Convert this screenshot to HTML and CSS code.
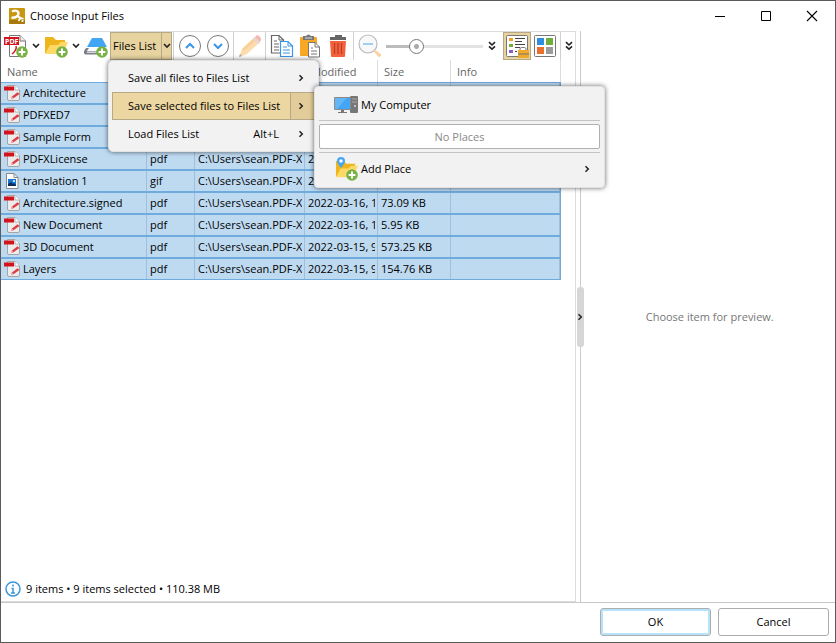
FILE: index.html
```html
<!DOCTYPE html>
<html lang="en">

<head>
    <meta charset="utf-8">
    <title>Choose Input Files</title>
    <link rel="stylesheet" href="styles.css">
</head>

<body>
    <!-- Shared icons -->
    <svg class="sprite" aria-hidden="true">
        <symbol id="caret" viewBox="0 0 8 8"><path d="M1 2L4 5L7 2" fill="none" stroke="#222" stroke-width="1.6"/></symbol>
        <symbol id="arrow" viewBox="0 0 8 8"><path d="M2.5 1.2L5.3 4L2.5 6.8" fill="none" stroke="#222" stroke-width="1.5"/></symbol>
        <symbol id="more" viewBox="0 0 8 10"><path d="M1 1.2L4 4L7 1.2M1 5.4L4 8.2L7 5.4" fill="none" stroke="#222" stroke-width="1.6"/></symbol>
        <symbol id="plus" viewBox="0 0 12 12"><circle cx="6" cy="6" r="5.8" fill="#77b243"/><path d="M6 2.6V9.4M2.6 6H9.4" stroke="#fff" stroke-width="2"/></symbol>
        <symbol id="pdf" viewBox="0 0 16 16">
            <path d="M3.5.5H11L15.5 5V14Q15.500 15.500 14 15.500H5Q3.500 15.500 3.500 14Z" fill="#ececec" stroke="#a5a5a5"/>
            <path d="M11 .5V5H15.5" fill="#fff" stroke="#a5a5a5" stroke-width=".8"/>
            <path d="M0 1.500H10V5.500H0Z" fill="#d2141e"/>
            <path d="M7 14L8 11.500L13.500 7.200L15.500 9L9.500 13.200Z" fill="#dd3f48"/>
            <path d="M7 14L8 11.500L9.500 13.200Z" fill="#f5b9bb"/>
        </symbol>
        <symbol id="folder" viewBox="0 0 24 24">
            <path d="M1 3H9L12 6H21V19H1Z" fill="#efb51c"/>
            <path d="M1 20L6 11L14 11L17 8H24L19 20Z" fill="#ffd968"/>
        </symbol>
    </svg>

    <div class="window">
        <header class="titlebar">
            <svg class="app-icon" viewBox="0 0 16 16"><rect width="16" height="16" rx="1" fill="#c8960f"/><path d="M0 12H16V15Q16 16 15 16H1Q0 16 0 15Z" fill="#a87a0c"/><path d="M3 3.500C6 2 9.500 2.500 9.500 5.500C9.500 8.500 6 10 2.500 9.800" fill="none" stroke="#fff" stroke-width="2.400"/><path d="M8 7C9 10 11 8.500 12.500 11" fill="none" stroke="#fff" stroke-width="2.200"/><path d="M9.500 13L11 10.500L14.500 10.500M12.500 13.500L14.500 12.500" fill="none" stroke="#fff" stroke-width="1.500"/></svg>
            <h1 class="title">Choose Input Files</h1>
            <button class="win-btn" aria-label="Minimize"><svg width="12" height="12"><path d="M1 6.5H11" stroke="#000"/></svg></button>
            <button class="win-btn" aria-label="Maximize"><svg width="12" height="12"><path d="M1.5 1.5H10.5V10.5H1.5Z" fill="none" stroke="#000"/></svg></button>
            <button class="win-btn" aria-label="Close"><svg width="12" height="12"><path d="M1 1L11 11M11 1L1 11" stroke="#000" stroke-width="1.1"/></svg></button>
        </header>

        <main class="panes">
            <section class="files">
                <div class="toolbar">
                    <button class="tool" aria-label="Add files">
                        <svg width="26" height="26" viewBox="0 0 26 26"><path d="M6.500 2.500H17L22.500 8V23.500H6.500Z" fill="#fff" stroke="#777"/><path d="M17 2.500V8H22.500" fill="#eee" stroke="#777"/><path d="M9 21C12 19 14 15 13 13" fill="none" stroke="#d2141e" stroke-width="1.5"/><rect x="1" y="4" width="15" height="8" fill="#d2141e"/><text class="pdf-label" x="2" y="11">PDF</text><use href="#plus" x="13" y="13" width="12" height="12"/></svg>
                    </button>
                    <button class="drop" aria-label="Add files options"><svg width="8" height="8"><use href="#caret"/></svg></button>
                    <button class="tool" aria-label="Add folder">
                        <svg width="26" height="26" viewBox="0 0 26 26"><use href="#folder" x="1" y="1" width="24" height="24"/><use href="#plus" x="13" y="13" width="12" height="12"/></svg>
                    </button>
                    <button class="drop" aria-label="Add folder options"><svg width="8" height="8"><use href="#caret"/></svg></button>
                    <button class="tool" aria-label="Scan">
                        <svg width="26" height="26" viewBox="0 0 26 26"><path d="M9 5H19L24 14H4Z" fill="#42a5f5"/><path d="M4 14H24L21 17H2Z" fill="#fff"/><path d="M3 15L1 18V20Q1 21.500 3 21.500H22V18H4L6 15Z" fill="#7b8186"/><path d="M4 18.500H20V20H4Z" fill="#d5d8da"/><use href="#plus" x="13" y="13" width="12" height="12"/></svg>
                    </button>
                    <div class="split">
                        <button class="split-main">Files List</button>
                        <button class="split-drop" aria-label="Files List menu"><svg width="8" height="8"><use href="#caret"/></svg></button>

                        <div class="menu" role="menu">
                            <button class="menu-item" role="menuitem"><span class="menu-text">Save all files to Files List</span><svg class="menu-arrow"><use href="#arrow"/></svg></button>
                            <button class="menu-item active" role="menuitem"><span class="menu-text">Save selected files to Files List</span><svg class="menu-arrow"><use href="#arrow"/></svg></button>
                            <button class="menu-item" role="menuitem"><span class="menu-text">Load Files List</span><span class="shortcut">Alt+L</span><svg class="menu-arrow"><use href="#arrow"/></svg></button>

                            <div class="menu submenu" role="menu">
                                <button class="place" role="menuitem">
                                    <svg width="26" height="26" viewBox="0 0 26 26"><rect x="17" y="4" width="8" height="17" rx="1" fill="#777"/><path d="M19 7H24M19 10H24" stroke="#aaa"/><circle cx="22" cy="14" r="1" fill="#ddd"/><rect x="1" y="5" width="17" height="13" rx="1" fill="#8a8a8a"/><rect x="2" y="6" width="15" height="11" fill="#42a5f5"/><path d="M2 17V6H14L4 17Z" fill="#64b5f6"/><path d="M8 18H11V20H14V21H5V20H8Z" fill="#777"/></svg>
                                    <span>My Computer</span>
                                </button>
                                <hr class="rule">
                                <div class="no-places">No Places</div>
                                <hr class="rule">
                                <button class="place" role="menuitem">
                                    <svg width="26" height="26" viewBox="0 0 26 26"><use href="#folder" x="2" y="2" width="23" height="23"/><path d="M8 12C6 9 4 7 4 5A4 4 0 0 1 12 5C12 7 10 9 8 12Z" fill="#42a5f5"/><circle cx="8" cy="5" r="1.8" fill="#fff"/><use href="#plus" x="13" y="13" width="12" height="12"/></svg>
                                    <span class="menu-text">Add Place</span>
                                    <svg class="menu-arrow"><use href="#arrow"/></svg>
                                </button>
                            </div>
                        </div>
                    </div>
                    <span class="sep"></span>
                    <button class="tool wide" aria-label="Move up"><svg width="24" height="24"><circle cx="12" cy="12" r="10.5" fill="#fff" stroke="#777"/><path d="M8 14L12 10L16 14" fill="none" stroke="#3a96e8" stroke-width="2"/></svg></button>
                    <button class="tool wide" aria-label="Move down"><svg width="24" height="24"><circle cx="12" cy="12" r="10.5" fill="#fff" stroke="#777"/><path d="M8 10L12 14L16 10" fill="none" stroke="#3a96e8" stroke-width="2"/></svg></button>
                    <span class="sep"></span>
                    <button class="tool wide" aria-label="Edit" disabled><svg width="24" height="24"><path d="M1 23L4 15L17 3L22 8L9 20Z" fill="#fddcae"/><path d="M4 15L17 3L19 5L6 17Z" fill="#fbcf97"/><path d="M16 4L19 1Q23 2 23 6L21 9Z" fill="#f6b5ae"/><path d="M15 5L17 3L22 8L20 10Z" fill="#e4d8d0"/><path d="M1 23L2 20L4 22Z" fill="#aaa"/></svg></button>
                    <span class="sep"></span>
                    <button class="tool wide" aria-label="Copy"><svg width="24" height="24"><path d="M10 19H1.5V1.5H9L13.5 6V8" fill="none" stroke="#666" stroke-width="1.2"/><path d="M9 1.5V6H13.5M4 7H7M4 10H9M4 13H9M4 16H9" fill="none" stroke="#666"/><path d="M10.5 7.5H18L22.5 12V22.5H10.5Z" fill="#fff" stroke="#3a96e8" stroke-width="1.2"/><path d="M18 7.5V12H22.5M13 13H17M13 16H20M13 19H20" fill="none" stroke="#3a96e8"/></svg></button>
                    <button class="tool wide" aria-label="Paste"><svg width="24" height="24"><rect x="2" y="3" width="17" height="19" rx="1" fill="#f9a825"/><path d="M5 2H8Q10.500 -1 13 2H16V6H5Z" fill="#777"/><path d="M7 4H14" stroke="#ddd"/><path d="M10.500 8.500H17L21.500 13V23H10.500Z" fill="#fff" stroke="#777"/><path d="M17 8.500V13H21.500M13 14H15M13 17H19M13 20H19" fill="none" stroke="#777"/></svg></button>
                    <button class="tool wide" aria-label="Delete"><svg width="24" height="24"><path d="M9 3V1H16V3H20V6H4V3Z" fill="#666"/><path d="M4 7H20L19 22Q19 23 18 23H6Q5 23 5 22Z" fill="#f2603c"/><path d="M8.500 9V20M12 9V20M15.500 9V20" stroke="#b63f24" stroke-width="1.2"/></svg></button>
                    <span class="sep"></span>
                    <button class="tool wide" aria-label="Zoom out" disabled><svg width="24" height="24"><circle cx="10" cy="10" r="9" fill="#f6f8fa" stroke="#bbb" stroke-width="1.2"/><path d="M5 10H15" stroke="#a4cdf4" stroke-width="2"/><path d="M17 16L23 21L21 23L16 17Z" fill="#fcd3a0" stroke="#fcd3a0"/></svg></button>
                    <input class="zoom" type="range" min="0" max="100" value="28" aria-label="Zoom">
                    <button class="more" aria-label="More zoom options"><svg width="8" height="10"><use href="#more"/></svg></button>
                    <button class="view on" aria-label="Details view">
                        <svg width="24" height="24"><rect x="1.500" y="1.500" width="21" height="21" rx="1" fill="#fff" stroke="#777"/><path d="M4 4H8V7H4Z" fill="#f9a01b"/><path d="M4 10H8V13H4Z" fill="#6fae3c"/><path d="M4 16H8V19H4Z" fill="#8e5cc9"/><path d="M10 4.500H20M10 7.500H17M10 10.500H20M10 13.500H15M10 17.500H12" stroke="#444"/><path d="M15 17V15Q15 13.500 16.500 13.500H19.500Q21 13.500 21 15V17" fill="none" stroke="#777"/><rect x="13" y="16" width="11" height="8" fill="#efaa2b"/><path d="M13 20H24" stroke="#777"/></svg>
                    </button>
                    <button class="view" aria-label="Thumbnails view">
                        <svg width="24" height="24"><rect x="1.500" y="1.500" width="21" height="21" rx="1" fill="#fff" stroke="#777"/><path d="M4 4H11V11H4Z" fill="#2f8de0"/><path d="M13 4H20V11H13Z" fill="#6fae3c"/><path d="M4 13H11V20H4Z" fill="#e8702c"/><path d="M13 13H20V20H13Z" fill="#9b9b9b"/></svg>
                    </button>
                    <span class="sep"></span>
                    <button class="more last" aria-label="More tools"><svg width="8" height="10"><use href="#more"/></svg></button>
                </div>

                <div class="list">
                    <table class="file-table">
                        <colgroup>
                            <col class="col-name">
                            <col class="col-type">
                            <col class="col-path">
                            <col class="col-date">
                            <col class="col-size">
                            <col class="col-info">
                        </colgroup>
                        <thead>
                            <tr><th>Name</th><th></th><th></th><th>Modified</th><th>Size</th><th>Info</th></tr>
                        </thead>
                        <tbody>
                            <tr><td><svg class="file-icon"><use href="#pdf"/></svg>Architecture</td><td></td><td></td><td></td><td></td><td></td></tr>
                            <tr><td><svg class="file-icon"><use href="#pdf"/></svg>PDFXED7</td><td></td><td></td><td></td><td></td><td></td></tr>
                            <tr><td><svg class="file-icon"><use href="#pdf"/></svg>Sample Form</td><td></td><td></td><td></td><td></td><td></td></tr>
                            <tr><td><svg class="file-icon"><use href="#pdf"/></svg>PDFXLicense</td><td>pdf</td><td><span class="clip">C:\Users\sean.PDF-X</span></td><td>2</td><td></td><td></td></tr>
                            <tr><td><svg class="file-icon" viewBox="0 0 16 16"><path d="M2.500.5H10L14 4.500V15.500H2.500Z" fill="#fff" stroke="#888"/><path d="M10 .5V4.500H14" fill="none" stroke="#888"/><rect x="4" y="6" width="8" height="7" fill="#1976d2"/><path d="M4 13V11L7 9L9 11L10 10L12 12V13Z" fill="#0d2f5c"/><circle cx="10" cy="8" r="1" fill="#fff"/></svg>translation 1</td><td>gif</td><td><span class="clip">C:\Users\sean.PDF-X</span></td><td>2</td><td></td><td></td></tr>
                            <tr><td><svg class="file-icon"><use href="#pdf"/></svg>Architecture.signed</td><td>pdf</td><td><span class="clip">C:\Users\sean.PDF-X</span></td><td><span class="clip">2022-03-16, 1</span></td><td>73.09 KB</td><td></td></tr>
                            <tr><td><svg class="file-icon"><use href="#pdf"/></svg>New Document</td><td>pdf</td><td><span class="clip">C:\Users\sean.PDF-X</span></td><td><span class="clip">2022-03-16, 1</span></td><td>5.95 KB</td><td></td></tr>
                            <tr><td><svg class="file-icon"><use href="#pdf"/></svg>3D Document</td><td>pdf</td><td><span class="clip">C:\Users\sean.PDF-X</span></td><td><span class="clip">2022-03-15, 9</span></td><td>573.25 KB</td><td></td></tr>
                            <tr><td><svg class="file-icon"><use href="#pdf"/></svg>Layers</td><td>pdf</td><td><span class="clip">C:\Users\sean.PDF-X</span></td><td><span class="clip">2022-03-15, 9</span></td><td>154.76 KB</td><td></td></tr>
                        </tbody>
                    </table>
                </div>

                <div class="status">
                    <svg width="16" height="16"><circle cx="8" cy="8" r="7" fill="#fff" stroke="#3a96dd" stroke-width="1.500"/><path d="M8 3.500V5.500M6.500 7.500H8V12M6 12H10" fill="none" stroke="#3a96dd" stroke-width="1.500"/></svg>
                    <span>9 items • 9 items selected • 110.38 MB</span>
                </div>
            </section>

            <div class="splitter">
                <button class="handle" aria-label="Toggle preview"><svg width="8" height="8"><use href="#arrow"/></svg></button>
            </div>

            <section class="preview">Choose item for preview.</section>
        </main>

        <footer class="actions">
            <button class="btn primary">OK</button>
            <button class="btn">Cancel</button>
        </footer>
    </div>
</body>

</html>
```
FILE: styles.css
```css
* {
    box-sizing: border-box;
}

body {
    margin: 0;
    font-family: "Open Sans", "Noto Sans", sans-serif;
    font-size: 11px;
    line-height: 16px;
    color: #000;
    background: #fff;
}

button {
    display: flex;
    flex: none;
    align-items: center;
    justify-content: center;
    padding: 0;
    border: 0;
    background: none;
    font: inherit;
    color: inherit;
    white-space: nowrap;
}

svg {
    display: block;
    flex: none;
}

.sprite {
    position: absolute;
    width: 0;
    height: 0;
}

.window {
    display: flex;
    flex-direction: column;
    height: 100vh;
    border: 1px solid #5a5a5a;
}

/* Title bar */
.titlebar {
    display: flex;
    align-items: center;
    height: 30px;
    padding-left: 8px;
}

.app-icon {
    width: 16px;
    height: 16px;
}

.title {
    flex: 1;
    margin: 0 0 0 5px;
    font-size: 11px;
    font-weight: normal;
}

.win-btn {
    width: 46px;
    height: 28px;
}

/* Panes */
.panes {
    display: flex;
    flex: 1;
    min-height: 0;
}

.files {
    display: flex;
    flex-direction: column;
    flex: 0 0 69%;
    min-width: 0;
    border-top: 1px solid #dcdcdc;
    border-right: 1px solid #dcdcdc;
}

.toolbar {
    display: flex;
    align-items: center;
    height: 28px;
    padding-left: 2px;
}

.tool {
    width: 26px;
    height: 28px;
}

.tool.wide {
    width: 28px;
}

.drop {
    width: 14px;
    height: 28px;
}

.pdf-label {
    font-size: 7px;
    font-weight: bold;
    fill: #fff;
}

.sep {
    flex: none;
    width: 1px;
    height: 28px;
    margin: 0 2px 0 1px;
    background: #d0d0d0;
}

.split {
    position: relative;
    display: flex;
    flex: none;
    width: 62px;
    height: 28px;
    margin-left: 1px;
    border: 1px solid #b7a985;
    background: #e7d3a0;
}

.split-main {
    flex: 1;
    justify-content: flex-start;
    padding-left: 2px;
}

.split-drop {
    width: 10px;
    border-left: 1px solid #b7a985;
}

.zoom {
    flex: 1;
    min-width: 0;
    height: 16px;
    margin: 0 2px;
    appearance: none;
    background: linear-gradient(to right, #bcbcbc 30%, #e2e2e2 30%) center / 100% 3px no-repeat;
}

.zoom::-webkit-slider-thumb {
    appearance: none;
    width: 15px;
    height: 15px;
    border: 1px solid #777;
    border-radius: 50%;
    background: radial-gradient(circle, #aaa 2px, #fff 3px);
}

.more {
    width: 14px;
    height: 28px;
}

.more.last {
    width: 12px;
}

.view {
    width: 28px;
    height: 28px;
}

.view.on {
    margin-left: 4px;
    border: 1px solid #b7a985;
    background: #e7d3a0;
}

/* Menus */
.menu {
    position: absolute;
    z-index: 10;
    top: 27px;
    left: -3px;
    width: 211px;
    padding: 3px;
    border: 1px solid #e2e2e2;
    border-radius: 5px;
    background: #f2f2f2;
    box-shadow: 0 0 5px rgba(0, 0, 0, 0.6);
}

.menu-item {
    width: 100%;
    height: 28px;
    padding: 0 10px 0 16px;
}

.menu-item.active {
    padding: 0 9px 0 15px;
    border: 1px solid #b7a985;
    background: linear-gradient(to right, #ecd7a3 177px, #b7a985 177px, #b7a985 178px, #e2cd9a 178px);
}

.menu-text {
    flex: 1;
    text-align: left;
}

.shortcut {
    margin-right: 18px;
}

.menu-arrow {
    width: 8px;
    height: 8px;
}

.submenu {
    top: 25px;
    left: 205px;
    width: 291px;
    padding: 2px 4px 3px;
    border-radius: 4px;
}

.place {
    justify-content: flex-start;
    gap: 2px;
    width: 100%;
    height: 31px;
    padding: 0 9px 0 14px;
}

.rule {
    height: 1px;
    margin: 0;
    border: 0;
    background: #c4c4c4;
}

.no-places {
    display: flex;
    align-items: center;
    justify-content: center;
    height: 25px;
    margin: 3px 0;
    border: 1px solid #b0b0b0;
    border-radius: 2px;
    background: #fff;
    color: #888;
}

/* File list */
.list {
    flex: 1;
}

.file-table {
    width: 560px;
    table-layout: fixed;
    border-collapse: separate;
    border-spacing: 0;
}

.col-name {
    width: 146px;
}

.col-type {
    width: 48px;
}

.col-path {
    width: 110px;
}

.col-date,
.col-size {
    width: 73px;
}

.file-table th {
    height: 22px;
    padding: 2px 6px 0;
    border-right: 1px solid #dcdcdc;
    font-weight: normal;
    text-align: left;
    color: #666;
}

.file-table td {
    height: 22px;
    padding: 0 3px;
    border: solid #6fabdd;
    border-width: 1px 0;
    background: linear-gradient(#9fbfda, #9fbfda) right / 1px 100% no-repeat #bedaf1;
    white-space: nowrap;
}

.file-table td:last-child {
    border-right-width: 1px;
}

.file-icon {
    display: inline-block;
    width: 16px;
    height: 16px;
    margin-right: 3px;
    vertical-align: -4px;
}

.clip {
    display: block;
    overflow: hidden;
}

.status {
    display: flex;
    align-items: center;
    gap: 5px;
    height: 25px;
    padding-left: 4px;
    border-bottom: 1px solid #dcdcdc;
}

/* Splitter and preview */
.splitter {
    display: flex;
    align-items: center;
    justify-content: center;
    width: 8px;
    background: linear-gradient(#ccc, #ccc) center / 1px 100% no-repeat;
}

.handle {
    width: 7px;
    height: 60px;
    border-radius: 3px;
    background: #d6d6d6;
}

.preview {
    display: flex;
    flex: 1;
    align-items: center;
    justify-content: center;
    color: #777;
}

/* Dialog buttons */
.actions {
    display: flex;
    justify-content: flex-end;
    gap: 7px;
    padding: 5px 6px 6px;
    border-top: 1px solid #c8c8c8;
}

.btn {
    width: 111px;
    height: 28px;
    border: 1px solid #adadad;
    border-radius: 3px;
    background: #fff;
}

.btn.primary {
    box-shadow: inset 0 0 0 2px #b5e3fb;
}
```
